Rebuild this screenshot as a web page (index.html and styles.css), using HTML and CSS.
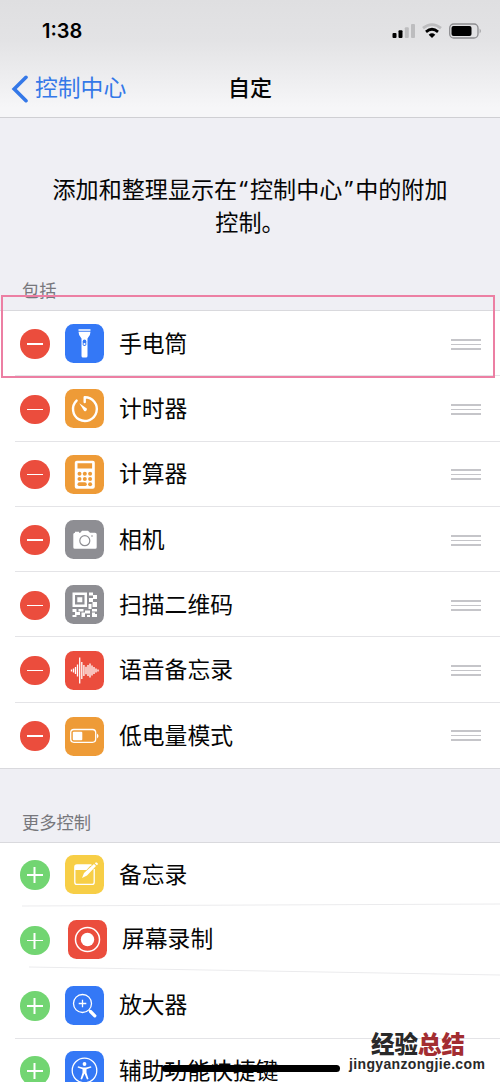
FILE: index.html
```html
<!DOCTYPE html>
<html lang="zh-CN">
<head>
<meta charset="utf-8">
<title>自定</title>
<link rel="stylesheet" href="styles.css">
</head>
<body>
<main class="screen">
  <header class="top">
    <div class="status">
      <span class="time">1:38</span>
      <svg class="status-icons" width="90" height="18" viewBox="0 0 90 18">
        <rect x="0.5" y="11" width="4" height="5" rx="1"/><rect x="6.5" y="8.3" width="4" height="7.7" rx="1"/>
        <g fill="#bdbdbf"><rect x="12.8" y="5.3" width="4" height="10.7" rx="1"/><rect x="19" y="2" width="4" height="14" rx="1"/></g>
        <g fill="none" stroke-width="2.8"><path d="M31 6.2Q40 -1 49 6.2" stroke="#bdbdbf"/><path d="M34 9.8Q40 4.8 46 9.8" stroke="#000"/></g>
        <path d="M36.7 12.7Q40 9.8 43.3 12.7L40 16Z"/>
        <rect x="57.7" y="2" width="28.3" height="14" rx="4" fill="none" stroke="#8d8d90" stroke-width="1.3"/>
        <rect x="59.5" y="4" width="20" height="10" rx="2"/><path d="M87.7 6.5q2 2.500 0 5z" fill="#8d8d90"/>
      </svg>
    </div>
    <nav class="nav">
      <a class="back"><svg width="17" height="28" viewBox="0 0 17 28"><path d="M15 2.300L3.200 14L15 25.700" fill="none" stroke="#3478e8" stroke-width="3.600" stroke-linecap="round" stroke-linejoin="miter"/></svg><span>控制中心</span></a>
      <h1 class="title">自定</h1>
    </nav>
  </header>
  <p class="intro">添加和整理显示在<span class="quote">“</span>控制中心<span class="quote">”</span>中的附加<br>控制。</p>
  <h2 class="label label-first">包括</h2>
  <section class="list">
    <div class="row"><i class="toggle minus"></i>
      <svg class="icon blue" viewBox="0 0 39 39"><path fill="#fff" d="M13.500 5.300h12v1.400h-12zM13.500 7.700h12q0 4-3 6.800v17.500q0 1.500-1.500 1.500h-3q-1.500 0-1.500-1.500v-17.500q-3-2.800-3-6.800z"/><rect x="17.700" y="15.500" width="3.600" height="6.500" rx="1.800" fill="#3478f6"/><circle cx="19.500" cy="20" r="1.100" fill="#fff"/></svg>
      <span class="name">手电筒</span><i class="grip"></i></div>
    <div class="row"><i class="toggle minus"></i>
      <svg class="icon orange" viewBox="0 0 39 39"><path d="M19.700 13V8.200A11.900 11.900 0 1 1 11.600 11.600" fill="none" stroke="#fff" stroke-width="2.400" stroke-linecap="round" stroke-linejoin="round"/><path d="M14.300 14.300L21.800 19.600A2 2 0 0 1 19.200 22.100Z" fill="#fff"/></svg>
      <span class="name">计时器</span><i class="grip"></i></div>
    <div class="row"><i class="toggle minus"></i>
      <svg class="icon orange" viewBox="0 0 39 39"><rect x="9.800" y="5.700" width="20" height="28" rx="2" fill="#fff"/><g fill="#ee9b37"><path d="M12.500 8.300h14.600v5.200H12.500z"/><circle cx="14.500" cy="18.700" r="2"/><circle cx="19.800" cy="18.700" r="2"/><circle cx="25.100" cy="18.700" r="2"/><circle cx="14.500" cy="24" r="2"/><circle cx="19.800" cy="24" r="2"/><circle cx="25.100" cy="24" r="2"/><rect x="12.500" y="27.300" width="9.300" height="3.800" rx="1.900"/><circle cx="25.100" cy="29.200" r="2"/></g></svg>
      <span class="name">计算器</span><i class="grip"></i></div>
    <div class="row"><i class="toggle minus"></i>
      <svg class="icon gray" viewBox="0 0 39 39"><path d="M10 12.700v-1h4v1h1.300l1.700-2h6l2 2h5q1.700 0 1.700 1.500v13q0 1.500-1.500 1.500h-20.400q-1.500 0-1.500-1.500v-13q0-1.500 1.700-1.500z" fill="#fff"/><circle cx="19.800" cy="20.700" r="5" fill="none" stroke="#8e8e93" stroke-width="1.200"/><circle cx="27" cy="16" r=".8" fill="#8e8e93"/></svg>
      <span class="name">相机</span><i class="grip"></i></div>
    <div class="row"><i class="toggle minus"></i>
      <svg class="icon gray" viewBox="0 0 39 39"><path fill="#fff" fill-rule="evenodd" d="M7.500 7.500h14.500v14.500h-14.500zM10 10v9.500h9.500v-9.500zM12.300 12.300h5v5h-5zM24 7.500h4v3h-4zM28 10h4v4h-4zM24 13h4v4h-4zM27.500 17h4.500v5h-4.500zM23.500 19h3v5h-3zM7.500 24h4v3h-4zM13.500 24h5v2.500h-5zM20 25.500h5v3h-5zM27 24h5v2.500h-5zM10 27h5v3h-5zM7.500 30h4v2h-4zM16.500 27.500h3.500v4.500h-3.500zM22 30h3v2h-3zM27 27.500h3v4.500h-3zM30 29h2v3h-2z"/></svg>
      <span class="name">扫描二维码</span><i class="grip"></i></div>
    <div class="row"><i class="toggle minus"></i>
      <svg class="icon red" viewBox="0 0 39 39"><path d="M6.500 18.500v2M8.500 17.500v4M10.500 16v7M12.500 13.500v12M14.700 6.500v26M16.800 11v17M18.900 14v11M21 15.800v7.400M23 14v11M25 12.500v14M27 14.500v10M29 16v7M31 17.500v4M33 18.500v2" fill="none" stroke="#fff" stroke-width="1.300"/></svg>
      <span class="name">语音备忘录</span><i class="grip"></i></div>
    <div class="row low-power"><i class="toggle minus"></i>
      <svg class="icon orange" viewBox="0 0 39 39"><rect x="5.700" y="12.500" width="25" height="12.800" rx="3.200" fill="none" stroke="#fff" stroke-width="1.300"/><rect x="7.800" y="14.700" width="9.500" height="8.500" rx="1" fill="#fff"/><path d="M32 16.500q3 2.500 0 5z" fill="#fff"/></svg>
      <span class="name">低电量模式</span><i class="grip"></i></div>
  </section>
  <h2 class="label label-more">更多控制</h2>
  <section class="list more">
    <div class="row"><i class="toggle plus"></i>
      <svg class="icon yellow" viewBox="0 0 39 39"><path d="M26.500 10H12q-2.200 0-2.200 2.200v15q0 2.200 2.200 2.200h15q2.200 0 2.200-2.200V14" fill="none" stroke="#fff" stroke-width="1.300"/><path d="M10 10h16l-4.500 5H10zM17 23l2-5L29 9l2 2-9 9.500zM29.800 8.300l1.200-1q2 .5 2 2L31.800 10.300z" fill="#fff"/></svg>
      <span class="name">备忘录</span></div>
    <div class="row recording"><i class="toggle plus"></i>
      <svg class="icon red" viewBox="0 0 39 39"><circle cx="19.500" cy="19.500" r="12" fill="none" stroke="#fff" stroke-width="1.500"/><circle cx="19.500" cy="19.500" r="6.700" fill="#fff"/></svg>
      <span class="name">屏幕录制</span></div>
    <div class="row"><i class="toggle plus"></i>
      <svg class="icon blue" viewBox="0 0 39 39"><g fill="none" stroke="#fff" stroke-width="1.300"><circle cx="17.500" cy="17.500" r="9"/><path d="M13.700 17.500h7.600M17.500 13.700v7.600"/><path d="M24 24l1.500 1.500"/><path d="M25.500 25.500l4.300 4.300" stroke-width="3.300" stroke-linecap="round"/></g></svg>
      <span class="name">放大器</span></div>
    <div class="row"><i class="toggle plus"></i>
      <svg class="icon blue" viewBox="0 0 39 39"><circle cx="19.500" cy="19.500" r="12.300" fill="none" stroke="#fff" stroke-width="1.300"/><g fill="#fff"><circle cx="19.500" cy="13" r="1.900"/><path d="M13 15.300l5 1.200h3l5-1.200.4 1.200-4.900 1.700v3.500l2 6.300-1.500.5-2.500-6-2.500 6-1.500-.5 2-6.300v-3.500l-4.900-1.700z"/></g></svg>
      <span class="name">辅助功能快捷键</span></div>
  </section>
  <svg class="slanted" width="500" height="80" viewBox="0 0 500 80" fill="none" stroke="#ebebed"><path d="M22 6L500 4"/><path d="M29 67L500 75"/></svg>
  <div class="highlight"></div>
  <div class="home"></div>
  <div class="mark"><div class="mark-name">经验<span>总结</span></div><div class="mark-url">jingyanzongjie.com</div></div>
</main>
</body>
</html>
```

FILE: styles.css
```css
* { box-sizing: border-box; }
body { margin: 0; background: #efeff4; font-family: "Liberation Sans", "Noto Sans CJK SC", sans-serif; color: #050505; }
.screen { position: relative; width: 500px; height: 1082px; overflow: hidden; background: #efeff4; }
.top { height: 118px; border-bottom: 1px solid #cfcfd3; background: linear-gradient(#dfdfe1, #e3e3e5 35%, #f6f6f8 92%); }
.status { display: flex; justify-content: space-between; height: 60px; padding: 22px 18px 0 42px; }
.time { font: 600 20px/19px Inter, sans-serif; color: #000; }
.nav { display: grid; grid-template-columns: 1fr auto 1fr; align-items: center; height: 57px; }
.back { display: flex; align-items: center; gap: 7px; padding-left: 11px; color: #3478e8; font-size: 22.8px; line-height: 30px; }
.back span { position: relative; top: -1px; }
.title { margin: 0; font-size: 22px; font-weight: 500; line-height: 30px; }
.intro { margin: 0; padding-top: 55px; height: 164px; text-align: center; font-size: 23.1px; line-height: 32.500px; }
.quote { display: inline-block; width: 12.800px; text-align: center; font-family: "Noto Sans", sans-serif; }
.label { margin: 0; padding-left: 22px; font-size: 17.3px; line-height: 24px; font-weight: 400; color: #77777c; }
.label-first { height: 31px; margin-top: -3px; }
.label-more { height: 73px; padding-top: 42px; }
.list { background: #fff; border-top: 1px solid #d9d9dd; border-bottom: 1px solid #d9d9dd; }
.row { display: grid; grid-template-columns: 30px 39px 1fr 30px; column-gap: 15px; align-items: center; height: 65.3px; padding: 0 19px 0 20px; background: linear-gradient(#e4e4e7, #e4e4e7) 15px 100% / 100% 1px no-repeat; }
.row:last-child { background: none; }
.toggle { position: relative; width: 29.500px; height: 29.500px; margin-top: 1px; border-radius: 50%; }
.minus { background: #eb4d3d; }
.plus { background: #72d572; }
.minus::before, .plus::before, .plus::after { content: ""; position: absolute; left: 7px; top: 14px; width: 15.500px; height: 1.500px; background: #fff; }
.plus::after { transform: rotate(90deg); }
.icon { width: 39px; height: 39px; border-radius: 8.500px; }
.blue { background: #3478f6; }
.orange { background: #ee9b37; }
.gray { background: #8e8e93; }
.red { background: #eb4d3d; }
.yellow { background: #f7ce46; }
.name { font-size: 22.8px; line-height: 32px; white-space: nowrap; }
.grip { width: 30px; height: 11px; margin-top: 1px; background: repeating-linear-gradient(#c5c5c9 0 1.600px, transparent 1.600px 4.600px); }
.more .row { padding-bottom: 2px; }
.more .row:nth-child(-n+2) { background: none; }
.low-power .icon, .low-power .name { position: relative; top: 1px; }
.recording .icon, .recording .name { position: relative; left: 3px; top: -1px; }
.slanted { position: absolute; left: 0; top: 900px; }
.highlight { position: absolute; left: 1px; top: 295px; width: 494px; height: 83px; border: 2px solid #ec7fa3; }
.home { position: absolute; left: 162px; top: 1065px; width: 178px; height: 7px; border-radius: 4px; background: #000; }
.mark { position: absolute; left: 349px; top: 1033px; width: 140px; white-space: nowrap; color: #292929; }
.mark-name { padding-left: 22px; font-size: 23.5px; line-height: 24px; font-weight: 900; }
.mark-name span { color: #a32d31; }
.mark-url { font: 700 14px/14px "Liberation Sans", sans-serif; letter-spacing: .35px; }
```
